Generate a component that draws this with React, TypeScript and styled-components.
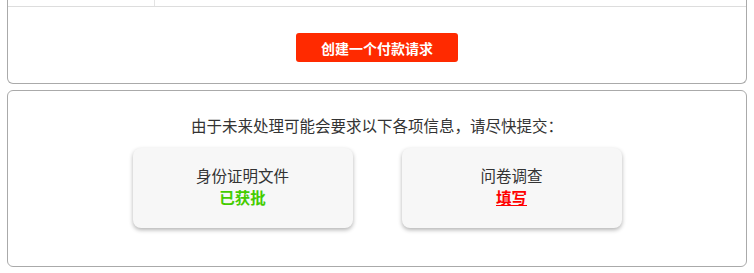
import React from 'react';
import styled, { createGlobalStyle } from 'styled-components';

const GlobalStyle = createGlobalStyle`
  html, body {
    margin: 0;
    padding: 0;
    background: #fff;
    font-family: "Liberation Sans", "Noto Sans CJK SC", sans-serif;
    color: #333;
  }
`;

const Page = styled.div`
  padding: 0 7px;
  display: flex;
  flex-direction: column;
  gap: 6px;
`;

const Panel = styled.div<{ $open?: boolean }>`
  border: 1px solid #aaa;
  border-top: ${props => (props.$open ? 'none' : '1px solid #aaa')};
  border-radius: ${props => (props.$open ? '0 0 6px 6px' : '6px')};
  background: #fff;
`;

const TableRow = styled.div`
  display: grid;
  grid-template-columns: 147px 1fr;
  height: 6px;
  border-bottom: 1px solid #ddd;
`;

const Cell = styled.div<{ $divider?: boolean }>`
  border-right: ${props => (props.$divider ? '1px solid #e4e4e4' : 'none')};
`;

const ButtonRow = styled.div`
  display: flex;
  justify-content: center;
  padding: 26px 0 21px;
`;

const PayButton = styled.button`
  width: 162px;
  height: 29px;
  border: none;
  border-radius: 3px;
  background: #ff2a00;
  color: #fff;
  font-family: "Liberation Sans", "Noto Sans CJK SC", sans-serif;
  font-size: 14px;
  font-weight: bold;
  cursor: pointer;
`;

const InfoBody = styled.div`
  display: flex;
  flex-direction: column;
  align-items: center;
  padding: 25px 0 38px;
`;

const Notice = styled.p`
  margin: 0 0 10px;
  font-size: 15.5px;
  line-height: 22px;
  color: #333;
`;

const CardRow = styled.div`
  display: flex;
  gap: 49px;
`;

const Card = styled.div`
  width: 220px;
  height: 80px;
  box-sizing: border-box;
  padding-top: 18px;
  background: #f7f7f7;
  border-radius: 8px;
  box-shadow: 0 2px 4px rgba(0, 0, 0, 0.3);
  display: flex;
  flex-direction: column;
  align-items: center;
`;

const CardTitle = styled.div`
  font-size: 15.5px;
  line-height: 22px;
  color: #333;
`;

const Status = styled.div<{ $tone: 'ok' | 'todo' }>`
  font-size: 15.5px;
  line-height: 22px;
  font-weight: bold;
  color: ${props => (props.$tone === 'ok' ? '#44cc00' : '#ff0000')};
  text-decoration: ${props => (props.$tone === 'todo' ? 'underline' : 'none')};
  cursor: ${props => (props.$tone === 'todo' ? 'pointer' : 'default')};
`;

const items = [
  { title: '身份证明文件', status: '已获批', tone: 'ok' as const },
  { title: '问卷调查', status: '填写', tone: 'todo' as const },
];

const App: React.FC = () => {
  return (
    <>
      <GlobalStyle />
      <Page>
        <Panel $open>
          <TableRow>
            <Cell $divider />
            <Cell />
          </TableRow>
          <ButtonRow>
            <PayButton>创建一个付款请求</PayButton>
          </ButtonRow>
        </Panel>
        <Panel>
          <InfoBody>
            <Notice>由于未来处理可能会要求以下各项信息，请尽快提交：</Notice>
            <CardRow>
              {items.map(item => (
                <Card key={item.title}>
                  <CardTitle>{item.title}</CardTitle>
                  <Status $tone={item.tone}>{item.status}</Status>
                </Card>
              ))}
            </CardRow>
          </InfoBody>
        </Panel>
      </Page>
    </>
  );
};

export default App;
